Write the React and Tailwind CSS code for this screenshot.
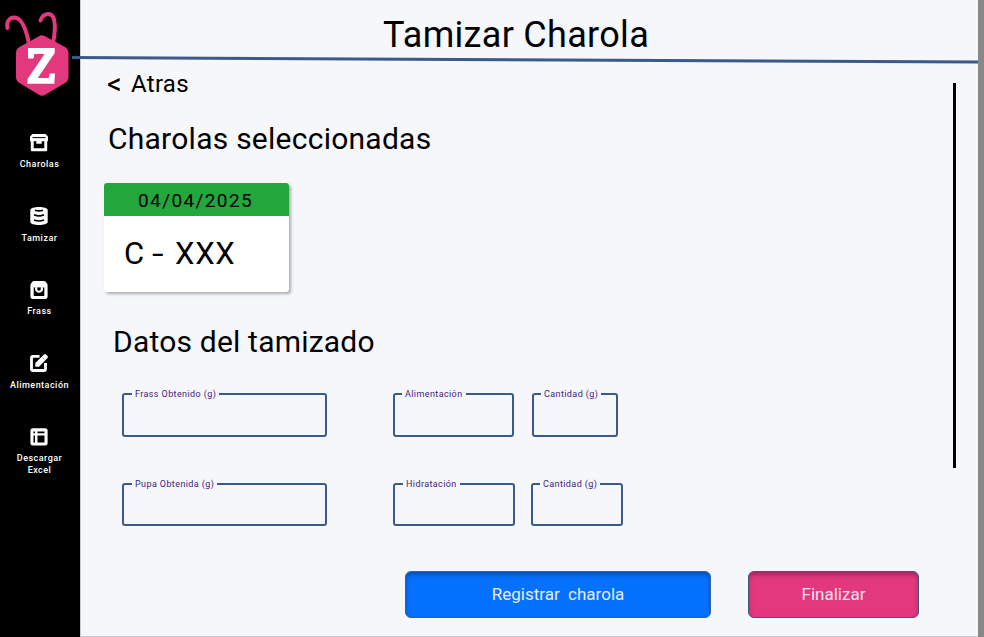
import React from "react";

function Logo() {
  return (
    <svg className="block h-[100px] w-20" viewBox="0 0 80 100" fill="none">
      <path d="M7.500 28C6 21 10 17.500 14.500 17.500C22 18 26.500 31 29 44" stroke="#e2387d" strokeWidth="4" strokeLinecap="round" />
      <path d="M40.500 20.500C42 15.500 45.500 14 49 14C56.500 15 55.500 31 53 43" stroke="#e2387d" strokeWidth="4" strokeLinecap="round" />
      <path d="M38.500 36.500Q42 34 45.500 36.500L65 47Q68.500 49 68.500 53V77Q68.500 81 65 83L45.500 94.500Q42 97 38.500 94.500L19.500 83Q16 81 16 77V53Q16 49 19.500 47Z" fill="#e2387d" />
      <path d="M28 48H54.700V53L37.800 78H48.700L49.700 73.500H55L54.300 83.700H27.500V79L44.500 54H34.300L33.500 58.500H28Z" fill="#fff" />
    </svg>
  );
}

const icons = {
  tray: (
    <>
      <path d="M2.500 0H15.500L17.500 2Q18 2.500 18 3.300V6.500Q18 7.200 17.200 7.500V16Q17.200 17.300 16 17.300H2Q.8 17.300 .8 16V7.500Q0 7.200 0 6.500V3.300Q0 2.500 .5 2Z" fill="#fff" />
      <path d="M2.500 3.600H15.500" stroke="#000" strokeWidth="1" />
      <path d="M3.700 7.300H6.300V9.700H11.700V7.300H14.300V14.300H3.700Z" fill="#000" />
    </>
  ),
  sieve: (
    <>
      <path d="M.3 3C.3-1 17.700-1 17.700 3V15C17.700 19 .3 19 .3 15Z" fill="#fff" />
      <path d="M5 3.300Q9 4.500 13 3.300M4 7.800Q9 10 14 7.800M4 12.900Q9 15 14 12.900" stroke="#000" strokeWidth="1.600" fill="none" />
    </>
  ),
  bag: (
    <>
      <path d="M4 0H14Q15 0 15.700 .8L17 2.600Q17.600 3.300 17.600 4.500V15.500Q17.600 18 15.200 18H2.800Q.4 18 .4 15.500V4.500Q.4 3.300 1 2.600L2.300 .8Q3 0 4 0Z" fill="#fff" />
      <path d="M3.700 6.500H14.300V15H3.700Z" fill="#000" />
      <path d="M5 6.300V8C5 13 13 13 13 8V6.300" fill="#fff" />
      <path d="M7.300 6.500H10.700V8C10.700 10.300 7.300 10.300 7.300 8Z" fill="#000" />
    </>
  ),
  edit: (
    <>
      <path d="M9.500 2.300H3Q1.500 2.300 1.500 3.800V15Q1.500 16.500 3 16.500H14Q15.500 16.500 15.500 15V9" stroke="#fff" strokeWidth="2.800" fill="none" />
      <path d="M5.300 9L14 .5Q15-.3 16 .6L17.500 2Q18.300 3 17.500 4L9 12.700H5.300Z" fill="#fff" />
      <path d="M12.500 3.500L14.500 5.500" stroke="#000" strokeWidth=".4" />
    </>
  ),
  table: (
    <>
      <rect x=".4" y=".2" width="17.200" height="17.400" rx="2.500" fill="#fff" />
      <path d="M3.500 3.500H5V5.200H3.500ZM7.500 3.500H14.500V5.200H7.500ZM3.500 7.400H5V14.500H3.500ZM7.500 7.400H14.500V14.500H7.500Z" fill="#000" />
    </>
  ),
};

const items = [
  { icon: "tray", label: "Charolas" },
  { icon: "sieve", label: "Tamizar" },
  { icon: "bag", label: "Frass" },
  { icon: "edit", label: "Alimentación" },
  { icon: "table", label: "Descargar Excel" },
];

function Sidebar() {
  return (
    <aside className="flex h-full w-20 shrink-0 flex-col bg-black">
      <Logo />
      <nav className="mt-[33.5px] flex flex-col">
        {items.map(({ icon, label }) => (
          <a key={label} className="flex h-[73.5px] w-[79px] flex-col items-center text-center">
            <svg className="mr-px block h-[18px] w-[18px] shrink-0" viewBox="0 0 18 18">{icons[icon]}</svg>
            <span className="mt-[6.5px] w-[62px] text-[9px] leading-3 font-medium tracking-[0.48px] text-white">{label}</span>
          </a>
        ))}
      </nav>
    </aside>
  );
}

function Field({ label, className }) {
  return (
    <fieldset className={"shrink-0 rounded-[3px] border-2 border-[#3a5a89] " + className}>
      <legend className="px-[3px] text-[9px] leading-3 tracking-[0.4px] whitespace-nowrap text-[#43217d]">{label}</legend>
    </fieldset>
  );
}

function Card() {
  return (
    <div className="mt-[26px] ml-[23px] h-[109px] w-[185px] overflow-hidden rounded-[3px] bg-white shadow-[2px_2px_3px_rgba(0,0,0,0.3)]">
      <div className="h-[33px] bg-[#23a63b] pl-[34px] text-[19px] leading-[35px] tracking-[1.4px]">04/04/2025</div>
      <div className="flex items-center pt-5 pl-5 text-[31px] leading-9 tracking-[0.7px]">
        <span className="w-[28px]">C</span>
        <span className="inline-block w-[23px] origin-left scale-x-[1.35]">-</span>
        <span>XXX</span>
      </div>
    </div>
  );
}

export default function App() {
  return (
    <div className="relative flex h-[637px] w-[984px] overflow-hidden bg-[#f5f7fb] font-['Roboto',sans-serif] text-black">
      <Sidebar />
      <main className="flex min-w-0 flex-1 flex-col border-b border-l border-[#c9cbd0]">
        <h1 className="h-[61px] pt-3.5 pl-[302px] text-[36px] leading-[42px] tracking-[0.3px] whitespace-nowrap">Tamizar Charola</h1>
        <div className="flex h-[261px]">
          <section className="flex-1">
            <a className="flex h-[38px] items-center pt-2 pl-[26px] text-[24px] leading-[30px] tracking-[0.3px]">
              <span className="w-[24px] text-[29px]">&lt;</span>
              <span>Atras</span>
            </a>
            <h2 className="mt-[22px] pl-[27px] text-[30px] leading-9 tracking-[0.25px] whitespace-nowrap">Charolas seleccionadas</h2>
            <Card />
          </section>
          <div className="mt-[22px] mr-[22px] h-[385px] w-[3px] shrink-0 bg-black" />
        </div>
        <h2 className="h-[66px] pt-[2px] pl-[32px] text-[30px] leading-9 tracking-[0.2px]">Datos del tamizado</h2>
        <div className="flex pl-[41px]">
          <Field label="Frass Obtenido (g)" className="h-[49px] w-[205px] pl-2" />
          <Field label="Alimentación" className="ml-[66px] h-[49px] w-[121px] pl-[7px]" />
          <Field label="Cantidad (g)" className="ml-[18px] h-[49px] w-[86px] pl-[7px]" />
        </div>
        <div className="mt-[41px] flex pl-[41px]">
          <Field label="Pupa Obtenida (g)" className="h-12 w-[205px] pl-2" />
          <Field label="Hidratación" className="ml-[66px] h-12 w-[122px] pl-2" />
          <Field label="Cantidad (g)" className="ml-4 h-12 w-[92px] pl-[7px]" />
        </div>
        <div className="mt-[45px] flex pl-[324px] text-[17px]">
          <button className="h-[47px] w-[306px] rounded-[6px] border border-[#37609b] bg-[#0471ff] whitespace-pre text-[#e6edfa] shadow-[inset_0_3px_4px_rgba(0,0,0,0.28)]">{"Registrar  charola"}</button>
          <button className="ml-[37px] h-[47px] w-[171px] rounded-[6px] border border-[#4b527f] bg-[#e2387d] text-[#fae3ed] shadow-[inset_0_3px_4px_rgba(0,0,0,0.28)]">Finalizar</button>
        </div>
      </main>
      <div className="w-1.5 shrink-0 bg-[#888888]" />
      <svg className="pointer-events-none absolute top-[54px] left-[72px] h-3 w-[906px]" viewBox="0 0 906 12">
        <path d="M0 3.500L906 8" stroke="#3a5a89" strokeWidth="3" />
      </svg>
    </div>
  );
}
